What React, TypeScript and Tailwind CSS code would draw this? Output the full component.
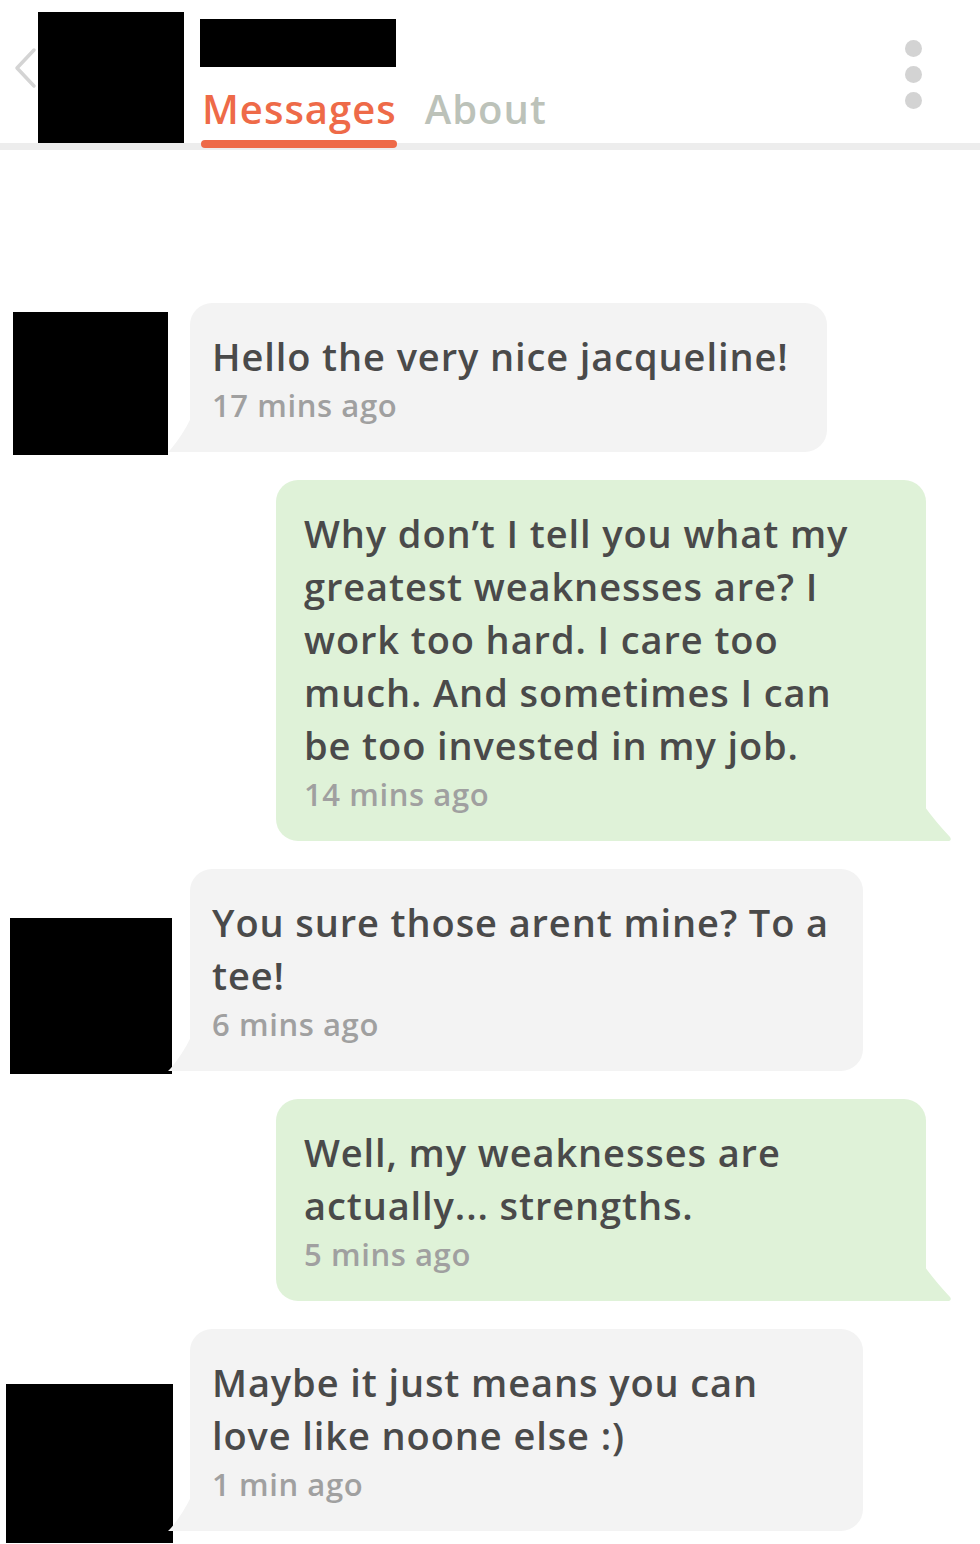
import React from "react";

type Msg = {
  side: "in" | "out";
  lines: string[];
  time: string;
  width: string;
  avatar?: string;
};

const messages: Msg[] = [
  {
    side: "in",
    lines: ["Hello the very nice jacqueline!"],
    time: "17 mins ago",
    width: "w-[637px]",
    avatar: "w-[155px] h-[143px] -mb-[3px] ml-[13px] mr-[22px]",
  },
  {
    side: "out",
    lines: [
      "Why don’t I tell you what my",
      "greatest weaknesses are? I",
      "work too hard. I care too",
      "much. And sometimes I can",
      "be too invested in my job.",
    ],
    time: "14 mins ago",
    width: "w-[650px]",
  },
  {
    side: "in",
    lines: ["You sure those arent mine? To a", "tee!"],
    time: "6 mins ago",
    width: "w-[673px]",
    avatar: "w-[162px] h-[156px] -mb-[3px] ml-[10px] mr-[18px]",
  },
  {
    side: "out",
    lines: ["Well, my weaknesses are", "actually... strengths."],
    time: "5 mins ago",
    width: "w-[650px]",
  },
  {
    side: "in",
    lines: ["Maybe it just means you can", "love like noone else :)"],
    time: "1 min ago",
    width: "w-[673px]",
    avatar: "w-[167px] h-[159px] -mb-[12px] ml-[6px] mr-[17px]",
  },
];

function Bubble({ m }: { m: Msg }) {
  const incoming = m.side === "in";
  return (
    <div
      className={`relative ${m.width} ${
        incoming
          ? "bg-[#f3f3f3] rounded-[22px] rounded-bl-none pl-[22px]"
          : "bg-[#dff2d8] rounded-[22px] rounded-br-none pl-[28px]"
      } pt-[27px] pb-[25px] pr-[20px]`}
    >
      {/* tail */}
      {incoming ? (
        <svg
          className="absolute bottom-0 -left-[22px]"
          width="23"
          height="34"
          viewBox="0 0 23 34"
        >
          <path d="M23 0 L23 34 L0 34 L3 31 Q14 18 23 0 Z" fill="#f3f3f3" />
        </svg>
      ) : (
        <svg
          className="absolute bottom-0 -right-[26px]"
          width="27"
          height="34"
          viewBox="0 0 27 34"
        >
          <path d="M0 0 L0 34 L24 34 Q27 33 25 30 Q10 14 0 0 Z" fill="#dff2d8" />
        </svg>
      )}
      <div className="text-[38px] leading-[53px] text-[#4a4a4a] font-semibold tracking-[0.9px]">
        {m.lines.map((l, i) => (
          <div key={i} className="whitespace-nowrap">
            {l}
          </div>
        ))}
      </div>
      <div className="text-[31px] leading-[44px] text-[#a0a0a0] font-semibold tracking-[0.6px]">
        {m.time}
      </div>
    </div>
  );
}

export default function App() {
  return (
    <div
      className="w-[980px] h-[1544px] bg-white overflow-hidden"
      style={{ fontFamily: '"Open Sans", "Liberation Sans", sans-serif' }}
    >
      {/* header */}
      <div className="relative h-[150px] border-b-[7px] border-[#ededed] flex">
        <div className="w-[38px] flex items-center pl-[12px]">
          <svg width="26" height="42" viewBox="0 0 26 42" className="-mt-[8px]">
            <path
              d="M22 3 L5 21 L22 39"
              fill="none"
              stroke="#d4d4d4"
              strokeWidth="3.5"
              strokeLinecap="round"
              strokeLinejoin="round"
            />
          </svg>
        </div>
        <div className="w-[146px] h-[131px] bg-black mt-[12px]" />
        <div className="ml-[16px] flex flex-col">
          <div className="w-[196px] h-[48px] bg-black mt-[19px]" />
          <div className="flex gap-[28px] mt-[17px] pl-[2px]">
            <div className="relative">
              <span className="text-[40px] leading-[50px] font-semibold tracking-[1px] text-[#ee6a48]">
                Messages
              </span>
              <div className="absolute -left-[1px] right-0 top-[56px] h-[8px] rounded-full bg-[#ee6a48]" />
            </div>
            <span className="text-[40px] leading-[50px] font-semibold tracking-[1px] text-[#bcc2b9]">
              About
            </span>
          </div>
        </div>
        <div className="ml-auto mr-[58px] mt-[40px] flex flex-col gap-[9px]">
          <div className="w-[17px] h-[17px] rounded-full bg-[#d3d3d3]" />
          <div className="w-[17px] h-[17px] rounded-full bg-[#d3d3d3]" />
          <div className="w-[17px] h-[17px] rounded-full bg-[#d3d3d3]" />
        </div>
      </div>

      {/* messages */}
      <div className="flex flex-col gap-[28px] pt-[153px]">
        {messages.map((m, i) =>
          m.side === "in" ? (
            <div key={i} className="flex items-end">
              <div className={`bg-black shrink-0 ${m.avatar}`} />
              <Bubble m={m} />
            </div>
          ) : (
            <div key={i} className="flex pl-[276px]">
              <Bubble m={m} />
            </div>
          )
        )}
      </div>
    </div>
  );
}
